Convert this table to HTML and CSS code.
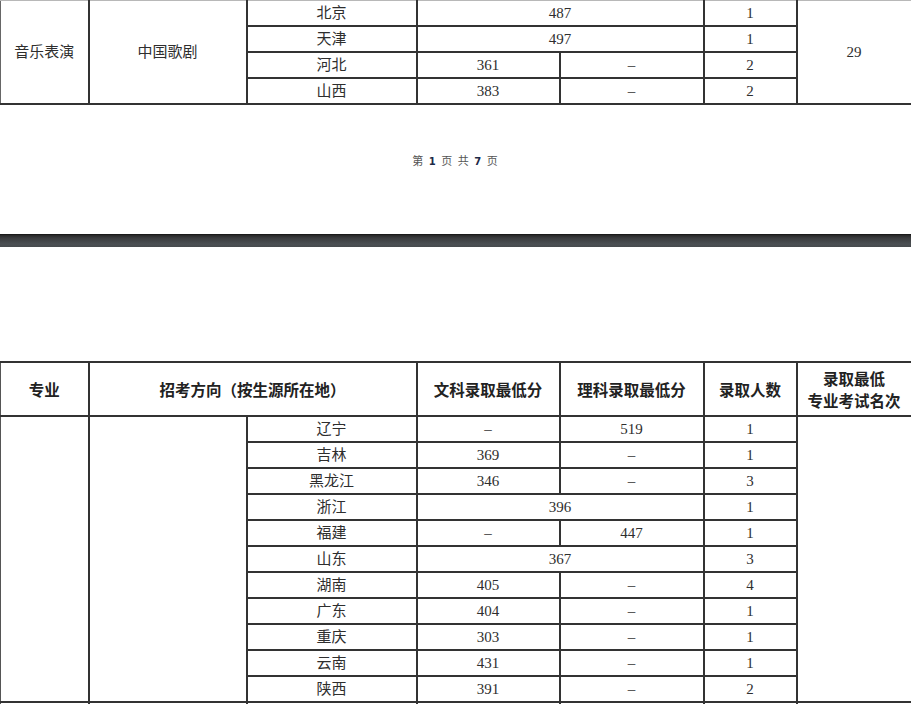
FILE: index.html
```html
<!DOCTYPE html>
<html lang="zh-CN">
<head>
<meta charset="utf-8">
<title>录取分数</title>
<link rel="stylesheet" href="styles.css">
</head>
<body>
<div class="page page-one">
  <table class="grid grid-top">
    <colgroup>
      <col class="c1"><col class="c2"><col class="c3"><col class="c4"><col class="c5"><col class="c6"><col class="c7">
    </colgroup>
    <tbody>
      <tr><td rowspan="4">音乐表演</td><td rowspan="4">中国歌剧</td><td>北京</td><td colspan="2">487</td><td>1</td><td rowspan="4">29</td></tr>
      <tr><td>天津</td><td colspan="2">497</td><td>1</td></tr>
      <tr><td>河北</td><td>361</td><td>–</td><td>2</td></tr>
      <tr><td>山西</td><td>383</td><td>–</td><td>2</td></tr>
    </tbody>
  </table>
  <div class="pager">第 <b>1</b> 页 共 <b>7</b> 页</div>
</div>
<div class="divider"></div>
<div class="page page-two">
  <table class="grid grid-main">
    <colgroup>
      <col class="c1"><col class="c2"><col class="c3"><col class="c4"><col class="c5"><col class="c6"><col class="c7">
    </colgroup>
    <thead>
      <tr class="head">
        <th>专业</th><th colspan="2">招考方向（按生源所在地）</th><th>文科录取最低分</th><th>理科录取最低分</th><th>录取人数</th><th>录取最低<br>专业考试名次</th>
      </tr>
    </thead>
    <tbody>
      <tr><td rowspan="11"></td><td rowspan="11"></td><td>辽宁</td><td>–</td><td>519</td><td>1</td><td rowspan="11"></td></tr>
      <tr><td>吉林</td><td>369</td><td>–</td><td>1</td></tr>
      <tr><td>黑龙江</td><td>346</td><td>–</td><td>3</td></tr>
      <tr><td>浙江</td><td colspan="2">396</td><td>1</td></tr>
      <tr><td>福建</td><td>–</td><td>447</td><td>1</td></tr>
      <tr><td>山东</td><td colspan="2">367</td><td>3</td></tr>
      <tr><td>湖南</td><td>405</td><td>–</td><td>4</td></tr>
      <tr><td>广东</td><td>404</td><td>–</td><td>1</td></tr>
      <tr><td>重庆</td><td>303</td><td>–</td><td>1</td></tr>
      <tr><td>云南</td><td>431</td><td>–</td><td>1</td></tr>
      <tr><td>陕西</td><td>391</td><td>–</td><td>2</td></tr>
      <tr><td></td><td></td><td></td><td></td><td></td><td></td><td></td></tr>
    </tbody>
  </table>
</div>
</body>
</html>
```

FILE: styles.css
```css
html, body {
  margin: 0;
  padding: 0;
  background: #ffffff;
  overflow: hidden;
}

body {
  width: 911px;
  height: 704px;
  font-family: "Liberation Serif", "Noto Sans CJK SC", serif;
  color: #2e2e2e;
}

.page {
  background: #ffffff;
}

.page-one {
  height: 234px;
}

.page-two {
  padding-top: 114px;
}

.grid {
  border-collapse: collapse;
  table-layout: fixed;
  width: 911px;
}

.c1 { width: 88px; }
.c2 { width: 158px; }
.c3 { width: 170px; }
.c4 { width: 143px; }
.c5 { width: 144px; }
.c6 { width: 93px; }
.c7 { width: 115px; }

.grid td,
.grid th {
  border: 2px solid #333333;
  text-align: center;
  vertical-align: middle;
  padding: 0;
  height: 24px;
  font-size: 15px;
  line-height: 18px;
  font-weight: normal;
}

.grid-top tr:first-child td {
  border-top: 1px solid #b8b8b8;
}

.grid-top td:first-child {
  border-left: 1px solid #666666;
}

.grid-main td:first-child,
.grid-main th:first-child {
  border-left: 1px solid #555555;
}

.grid-main .head th {
  height: 52px;
  font-weight: bold;
  font-size: 15.5px;
  line-height: 22px;
  color: #222222;
  font-family: "Noto Sans CJK SC", sans-serif;
}

.pager {
  margin-top: 48px;
  text-align: center;
  font-size: 11px;
  line-height: 14px;
  color: #555555;
  font-family: "Noto Sans CJK SC", sans-serif;
  letter-spacing: 1px;
  word-spacing: 1px;
}

.pager b {
  color: #1d2a48;
  font-family: "DejaVu Sans", sans-serif;
  font-size: 10px;
}

.divider {
  height: 13px;
  background: linear-gradient(#262626 0, #3a3c3e 3px, #4b4f53 9px, #45494c 13px);
  border-top: 1px solid #1a1a1a;
  box-sizing: border-box;
}
```
